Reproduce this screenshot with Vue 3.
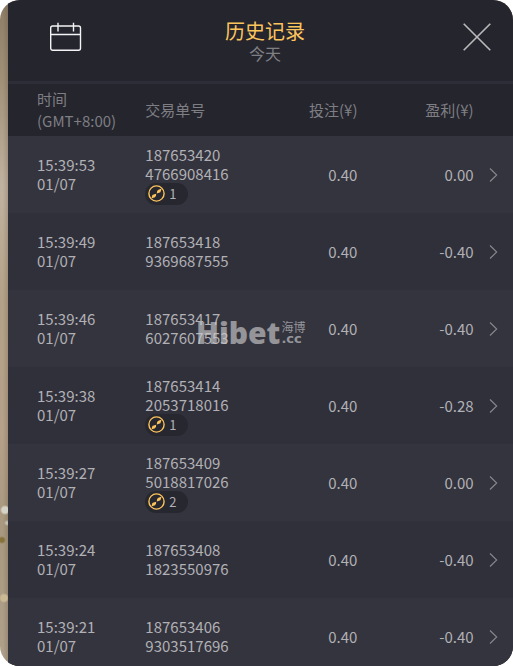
<script setup>
const records = [
  { time: '15:39:53', date: '01/07', order: ['187653420', '4766908416'], bet: '0.40', profit: '0.00', free: 1 },
  { time: '15:39:49', date: '01/07', order: ['187653418', '9369687555'], bet: '0.40', profit: '-0.40' },
  { time: '15:39:46', date: '01/07', order: ['187653417', '6027607553'], bet: '0.40', profit: '-0.40' },
  { time: '15:39:38', date: '01/07', order: ['187653414', '2053718016'], bet: '0.40', profit: '-0.28', free: 1 },
  { time: '15:39:27', date: '01/07', order: ['187653409', '5018817026'], bet: '0.40', profit: '0.00', free: 2 },
  { time: '15:39:24', date: '01/07', order: ['187653408', '1823550976'], bet: '0.40', profit: '-0.40' },
  { time: '15:39:21', date: '01/07', order: ['187653406', '9303517696'], bet: '0.40', profit: '-0.40' },
]
</script>

<template>
  <div class="screen">
    <main class="panel">
      <header class="bar">
        <button class="icon-btn calendar" type="button" aria-label="选择日期">
          <svg width="32" height="30" viewBox="0 0 32 30" fill="none" stroke="#f4f4f5" stroke-width="1.4">
            <rect x="0.7" y="4" width="29.8" height="24.3" rx="2" />
            <path d="M1 12.5H30.5M8 0.8V9.5M23.5 0.8V9.5" />
          </svg>
        </button>
        <div class="heading">
          <h1>历史记录</h1>
          <p>今天</p>
        </div>
        <button class="icon-btn close" type="button" aria-label="关闭">
          <svg width="28" height="28" viewBox="0 0 28 28" fill="none" stroke="#b9b9bc" stroke-width="1.6">
            <path d="M0.7 0.7L27.3 27.3M27.3 0.7L0.7 27.3" />
          </svg>
        </button>
      </header>

      <table>
        <colgroup>
          <col class="c-time" />
          <col class="c-order" />
          <col class="c-bet" />
          <col class="c-profit" />
          <col class="c-more" />
        </colgroup>
        <thead>
          <tr>
            <th class="time">时间<br />(GMT+8:00)</th>
            <th>交易单号</th>
            <th class="num">投注(¥)</th>
            <th class="num">盈利(¥)</th>
            <th></th>
          </tr>
        </thead>
        <tbody>
          <tr v-for="r in records" :key="r.time">
            <td class="time stacked">{{ r.time }}<br />{{ r.date }}</td>
            <td class="stacked">
              <span class="order">{{ r.order[0] }}<br />{{ r.order[1] }}</span>
              <span v-if="r.free" class="badge">
                <svg width="17" height="17" viewBox="0 0 17 17">
                  <circle cx="8.5" cy="8.5" r="7.6" fill="none" stroke="#fcc45c" stroke-width="1.4" />
                  <path d="M13.6 3.4L12.4 7.2L10.4 7.9L8.8 8.6L9 6.4L9.9 5.1Z" fill="#fcc45c" />
                  <path d="M3.4 13.6L4.4 10L6.4 9.2L8.2 8.8L8 10.8L7 12.2Z" fill="#fcc45c" />
                </svg>
                {{ r.free }}
              </span>
            </td>
            <td class="num">{{ r.bet }}</td>
            <td class="num">{{ r.profit }}</td>
            <td>
              <button class="icon-btn more" type="button" aria-label="查看详情">
                <svg width="9" height="16" viewBox="0 0 9 16" fill="none" stroke="#88888e" stroke-width="1.1">
                  <path d="M1 1.5L7.7 8L1 14.5" />
                </svg>
              </button>
            </td>
          </tr>
        </tbody>
      </table>

      <div class="watermark">
        <span class="brand">Hibet</span>
        <span class="side"><span class="cn">海博</span><span class="cc">.cc</span></span>
      </div>
    </main>
  </div>
</template>

<style>
body {
  background: #fff;
}
</style>

<style scoped>
.screen {
  box-sizing: border-box;
  height: 100vh;
  padding-left: 8px;
  overflow: hidden;
  border-radius: 20px;
  background:
    radial-gradient(circle at 5px 510px, #d5d2c8 3px, transparent 5px),
    radial-gradient(circle at 7px 523px, #c4bfb3 1px, transparent 3px),
    radial-gradient(circle at 2px 540px, #85723a 2px, transparent 4px),
    radial-gradient(circle at 4px 598px, #cbb994 3px, transparent 5px),
    linear-gradient(90deg, transparent 3px, rgba(75, 60, 40, 0.2) 8px),
    linear-gradient(#8c7c66, #a09078 12%, #c0b2a0 28%, #b3a287 45%, #b5a08a 65%, #a8987f 80%, #b0a18c);
  color: #b1b1b5;
  font: 15px/19px "Noto Sans CJK SC", "Noto Sans", sans-serif;
}

.panel {
  position: relative;
  height: 100%;
  overflow: hidden;
  background: #25252e;
}

.bar {
  display: grid;
  grid-template-columns: 1fr auto 1fr;
  align-items: start;
  height: 81px;
  padding: 0 22px 0 31px;
  border-bottom: 3px solid #2e2e39;
}

.heading {
  padding-top: 18px;
  text-align: center;
}

h1 {
  margin: 0;
  color: #fcc45c;
  font-size: 20px;
  font-weight: 400;
  line-height: 26px;
}

p {
  margin: 0;
  color: #7e7e83;
  font-size: 16px;
  line-height: 18px;
}

.icon-btn {
  padding: 0;
  border: 0;
  background: none;
  line-height: 0;
  cursor: pointer;
}

.calendar {
  justify-self: start;
  padding: 22px 11px 0;
}

.close {
  justify-self: end;
  padding-top: 23px;
}

table {
  width: 100%;
  border-collapse: collapse;
  table-layout: fixed;
}

.c-time {
  width: 27.2%;
}

.c-order {
  width: 22%;
}

.c-bet {
  width: 20%;
}

.c-profit {
  width: 23%;
}

th,
td {
  box-sizing: border-box;
  padding: 0;
  font-weight: 400;
  text-align: left;
  vertical-align: middle;
}

th {
  height: 52px;
  color: #7e7e83;
  line-height: 22px;
}

td {
  height: 77px;
}

.time {
  padding-left: 29px;
}

.stacked {
  padding-bottom: 2px;
}

.num {
  text-align: right;
}

tbody tr:nth-child(odd) {
  background: #34343e;
}

tbody tr:nth-child(even) {
  background: #30303b;
}

.order {
  display: block;
}

.badge {
  display: flex;
  align-items: center;
  gap: 4px;
  box-sizing: border-box;
  width: 43px;
  height: 22px;
  margin-bottom: -2px;
  padding-left: 3px;
  border-radius: 11px;
  background: #272730;
  font-size: 13px;
}

.more {
  display: block;
  margin: 0 auto;
}

.watermark {
  position: absolute;
  top: 319px;
  left: 188px;
  display: flex;
  gap: 1px;
  color: #c8c8cb;
  opacity: 0.65;
  pointer-events: none;
}

.brand {
  font: 800 30px/28px "Open Sans", "Noto Sans", sans-serif;
}

.side {
  display: flex;
  flex-direction: column;
}

.cn {
  font: 12px/15px "Noto Sans CJK SC", sans-serif;
}

.cc {
  font: 700 13px/10px "DejaVu Sans", sans-serif;
}
</style>
